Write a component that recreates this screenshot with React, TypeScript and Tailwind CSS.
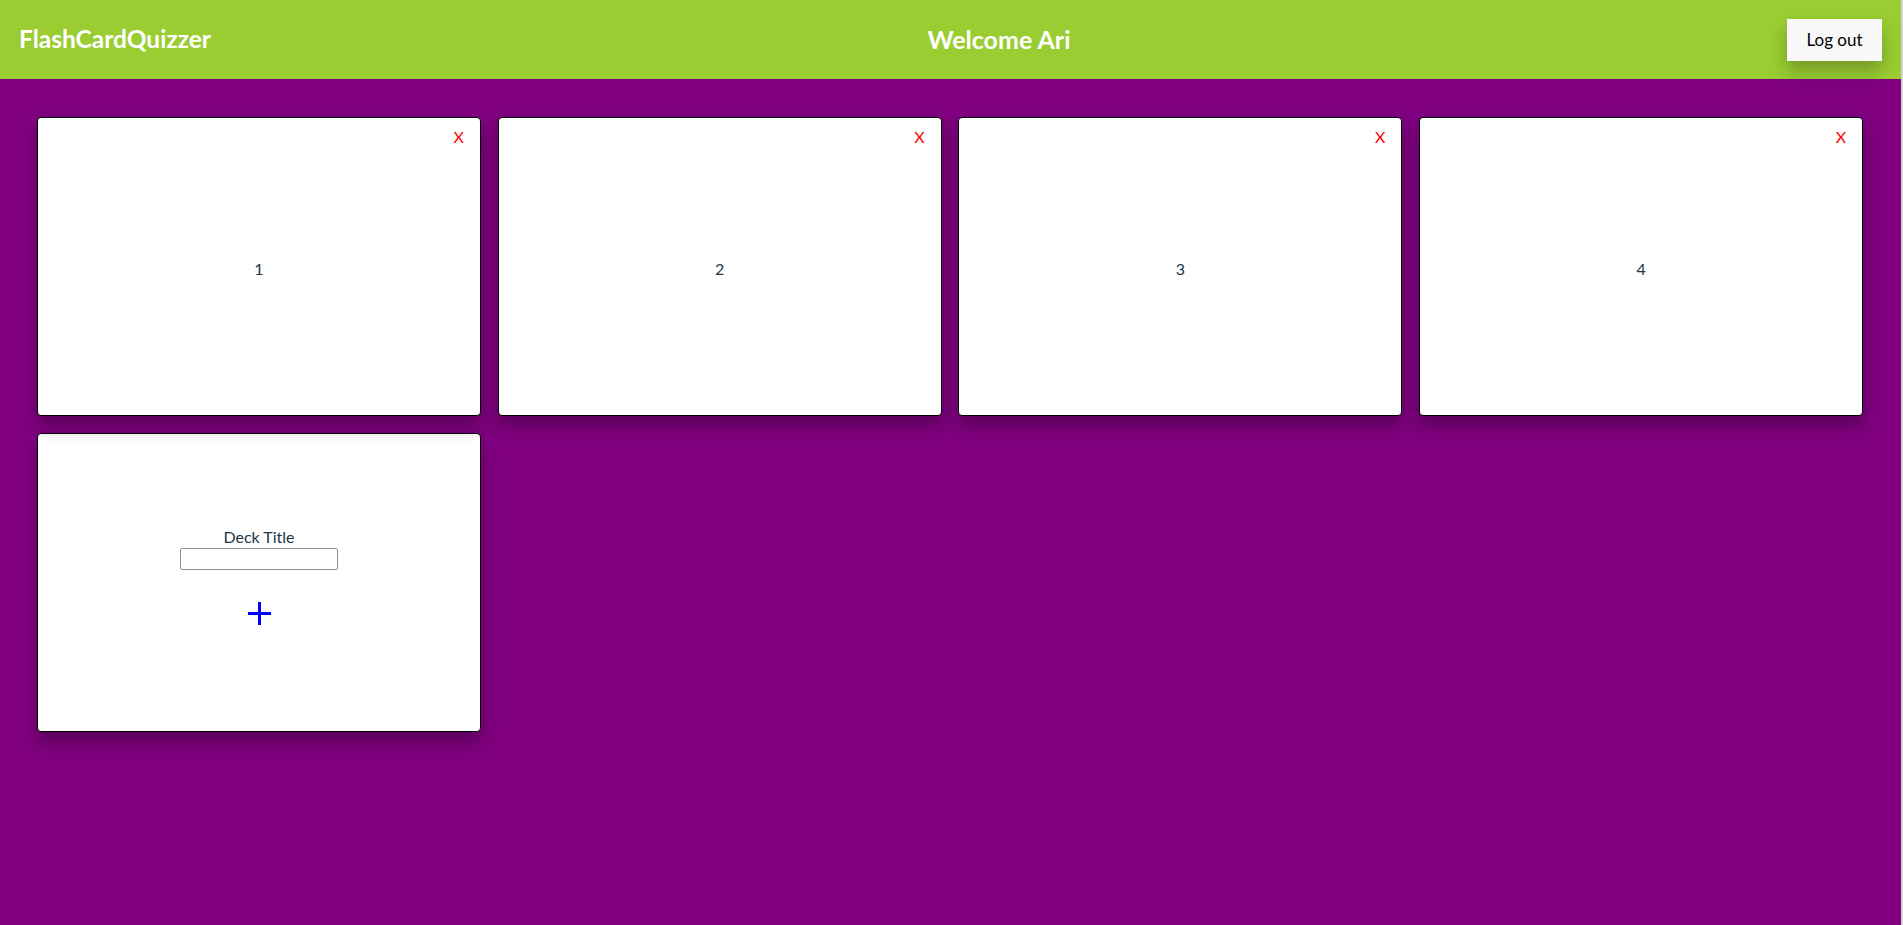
const decks = ["1", "2", "3", "4"];

const font = { fontFamily: "'Segoe UI', Lato, 'Open Sans', sans-serif" };

function DeckCard({ title }: { title: string }) {
  return (
    <div className="relative h-[299px] bg-white border border-black rounded-[4px] shadow-[0_10px_18px_0_rgba(0,0,0,0.3)] flex items-center justify-center">
      <button className="absolute top-[9px] right-[16px] text-[16px] leading-5 text-[#ff0000]">
        X
      </button>
      <span className="text-[16px] text-[#213547] translate-y-[2px]">{title}</span>
    </div>
  );
}

function NewDeckCard() {
  return (
    <div className="h-[299px] bg-white border border-black rounded-[4px] shadow-[0_10px_18px_0_rgba(0,0,0,0.3)] flex flex-col items-center justify-center">
      <label className="text-[16px] leading-5 text-[#213547] -mt-[14px]">Deck Title</label>
      <input
        type="text"
        className="mt-[1px] w-[158px] h-[22px] border border-[#8f8f9d] rounded-[2px] bg-white"
      />
      <button className="mt-[32px] w-[23px] h-[23px]">
        <svg width="23" height="23" viewBox="0 0 23 23">
          <path d="M11.5 0V23M0 11.5H23" stroke="#0000ff" strokeWidth="3" />
        </svg>
      </button>
    </div>
  );
}

export default function App() {
  return (
    <div className="min-h-[925px] bg-[#800080]" style={font}>
      <header className="h-[79px] bg-[#9acd32] flex items-center justify-between pl-[19px] pr-[21px]">
        <h1 className="text-[24.5px] font-bold text-white">FlashCardQuizzer</h1>
        <h1 className="text-[25px] font-bold text-white">Welcome Ari</h1>
        <button className="w-[95px] h-[42px] bg-[#f8f8f8] text-[17px] text-black shadow-[0_10px_18px_0_rgba(0,0,0,0.25)]">
          Log out
        </button>
      </header>
      <main className="pt-[38px] pl-[37px] grid grid-cols-[repeat(4,444px)] gap-x-[16.7px] gap-y-[17px]">
        {decks.map((d) => (
          <DeckCard key={d} title={d} />
        ))}
        <NewDeckCard />
      </main>
      <div className="fixed top-0 right-0 w-[2px] h-[925px] bg-[#d4d4d4]" />
    </div>
  );
}
